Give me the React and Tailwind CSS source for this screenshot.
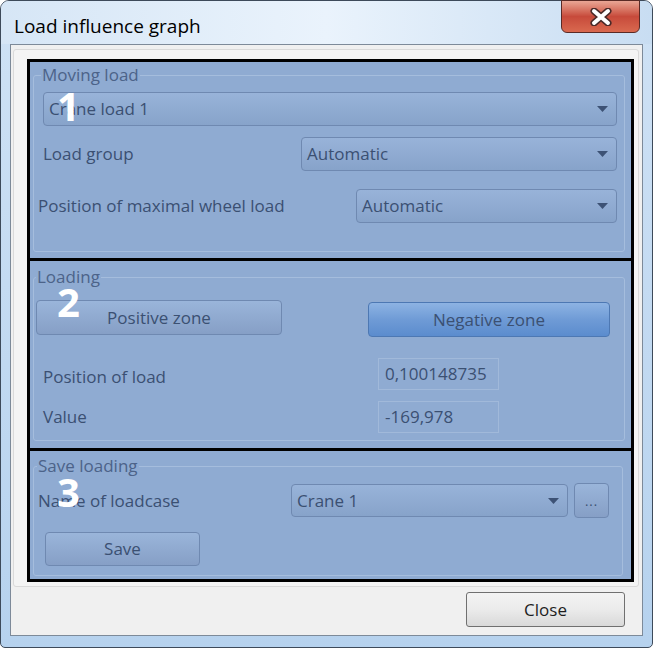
import React from "react"

const font = { fontFamily: '"Open Sans", "Noto Sans", sans-serif' }

function Arrow() {
    return (
        <svg width="11" height="6" viewBox="0 0 11 6" className="shrink-0">
            <path d="M0 0 H11 L5.5 6 Z" fill="#3d5275" />
        </svg>
    )
}

function Combo({ value, className = "" }) {
    return (
        <div className={`flex items-center justify-between pl-[5px] pr-[8px] rounded-[4px] border border-[#6f89b1] bg-gradient-to-b from-[#98b3d9] to-[#87a3ca] text-[17px] leading-[22px] text-[#3b5072] ${className}`}>
            <span>{value}</span>
            <Arrow />
        </div>
    )
}

function Button({ children, active, className = "" }) {
    const look = active
        ? "border-[#4d78b3] bg-gradient-to-b from-[#8db3e3] via-[#6f9bd6] to-[#5b8cce]"
        : "border-[#6f89b1] bg-gradient-to-b from-[#9ab5da] to-[#869fc6]"
    return (
        <div className={`flex items-center justify-center rounded-[4px] border text-[17px] leading-[22px] text-[#3b5072] ${look} ${className}`}>
            {children}
        </div>
    )
}

function Field({ value }) {
    return (
        <div className="w-[121px] h-[32px] flex items-center pl-[6px] border border-[#a1b9da] bg-[#8fabd2] text-[17px] leading-[22px] text-[#3b5072]">
            {value}
        </div>
    )
}

function Badge({ n, className }) {
    return (
        <span className={`absolute text-[40px] leading-none font-bold text-white ${className}`}>{n}</span>
    )
}

export default function App() {
    return (
        <div className="w-[653px] h-[649px] bg-white" style={font}>
            <div className="relative w-[653px] h-[648px] flex flex-col rounded-t-[9px] rounded-b-[5px] border border-[#3d4a5a] bg-gradient-to-b from-[#cfe2f5] to-[#b6d2ee]">
                {/* title bar */}
                <div className="h-[43px] flex items-center pl-[13px] pt-[6px] rounded-t-[8px] bg-gradient-to-r from-[#d6e6f6] via-[#eaf3fc] to-[#c8ddf2]">
                    <span className="text-[19px] leading-[24px] text-black">Load influence graph</span>
                </div>
                <div className="absolute top-[-1px] right-[12px] w-[79px] h-[33px] flex items-center justify-center rounded-b-[6px] border border-[#5a2a25] bg-gradient-to-b from-[#e9a695] via-[#c74a3b] to-[#d9694f]">
                    <svg width="24" height="18" viewBox="0 0 24 18">
                        <path d="M5 3 L19 15 M19 3 L5 15" stroke="#4a2a28" strokeWidth="7" strokeLinecap="round" />
                        <path d="M5 3 L19 15 M19 3 L5 15" stroke="#ffffff" strokeWidth="4" strokeLinecap="round" />
                    </svg>
                </div>

                {/* client area */}
                <div className="flex-1 ml-[9px] mr-[9px] mb-[11px] flex flex-col border border-[#7d8a99] bg-[#f0f0f0]">
                    <div className="ml-[2px] mr-[3px] mt-[4px] pt-[9px] pb-[4px] pl-[13px] pr-[4px] border border-[#dadada] rounded-[3px] bg-[#f4f4f4]">
                        {/* highlighted block */}
                        <div className="border-[3px] border-black bg-[#8fabd2]">
                            {/* section 1 */}
                            <div className="relative h-[199px] border-b-[3px] border-black pt-[3px] pl-[3px] pr-[6px]">
                                <fieldset className="h-[187px] border border-[#a5bddd] rounded-[3px] pl-[9px] pr-[7px] pt-[7px]">
                                    <legend className="-ml-[2px] px-[1px] text-[17px] leading-[20px] text-[#4c6389]">Moving load</legend>
                                    <Combo value="Crane load 1" className="h-[34px]" />
                                    <div className="mt-[11px] flex items-center justify-between">
                                        <span className="text-[17px] leading-[22px] text-[#3b5072]">Load group</span>
                                        <Combo value="Automatic" className="w-[316px] h-[34px]" />
                                    </div>
                                    <div className="mt-[18px] flex items-center justify-between">
                                        <span className="-ml-[5px] text-[17px] leading-[22px] text-[#3b5072]">Position of maximal wheel load</span>
                                        <Combo value="Automatic" className="w-[261px] h-[34px]" />
                                    </div>
                                </fieldset>
                                <Badge n="1" className="left-[27px] top-[24px]" />
                            </div>

                            {/* section 2 */}
                            <div className="relative h-[190px] border-b-[3px] border-black pt-[6px] pl-[3px] pr-[6px]">
                                <fieldset className="h-[174px] border border-[#a5bddd] rounded-[3px] pl-[2px] pr-[7px] pt-[13px]">
                                    <legend className="px-[1px] text-[17px] leading-[20px] text-[#4c6389]">Loading</legend>
                                    <div className="flex items-start">
                                        <Button className="w-[246px] h-[35px]">Positive zone</Button>
                                        <Button active className="ml-[86px] mt-[2px] w-[242px] h-[35px]">Negative zone</Button>
                                    </div>
                                    <div className="mt-[21px] flex items-center">
                                        <span className="ml-[7px] w-[335px] pt-[5px] text-[17px] leading-[22px] text-[#3b5072]">Position of load</span>
                                        <Field value="0,100148735" />
                                    </div>
                                    <div className="mt-[11px] flex items-center">
                                        <span className="ml-[7px] w-[335px] text-[17px] leading-[22px] text-[#3b5072]">Value</span>
                                        <Field value="-169,978" />
                                    </div>
                                </fieldset>
                                <Badge n="2" className="left-[27px] top-[21px]" />
                            </div>

                            {/* section 3 */}
                            <div className="relative h-[128px] pt-[5px] pl-[3px] pr-[9px]">
                                <fieldset className="h-[120px] border border-[#a5bddd] rounded-[3px] pl-[3px] pr-[13px] pt-[7px]">
                                    <legend className="px-[1px] text-[17px] leading-[20px] text-[#4c6389]">Save loading</legend>
                                    <div className="flex items-center">
                                        <span className="ml-[1px] w-[253px] text-[17px] leading-[22px] text-[#3b5072]">Name of loadcase</span>
                                        <Combo value="Crane 1" className="w-[277px] h-[33px]" />
                                        <Button className="ml-[6px] w-[35px] h-[35px] !text-[13px] tracking-[1px]">...</Button>
                                    </div>
                                    <Button className="mt-[14px] ml-[8px] w-[155px] h-[34px]">Save</Button>
                                </fieldset>
                                <Badge n="3" className="left-[27px] top-[21px]" />
                            </div>
                        </div>
                    </div>

                    <div className="flex justify-end pr-[17px] pt-[5px]">
                        <div className="w-[159px] h-[35px] flex items-center justify-center rounded-[3px] border border-[#707070] bg-gradient-to-b from-[#f3f3f3] via-[#ebebeb] to-[#d9d9d9] text-[17px] leading-[22px] text-[#1e1e1e]">
                            Close
                        </div>
                    </div>
                </div>
            </div>
        </div>
    )
}
